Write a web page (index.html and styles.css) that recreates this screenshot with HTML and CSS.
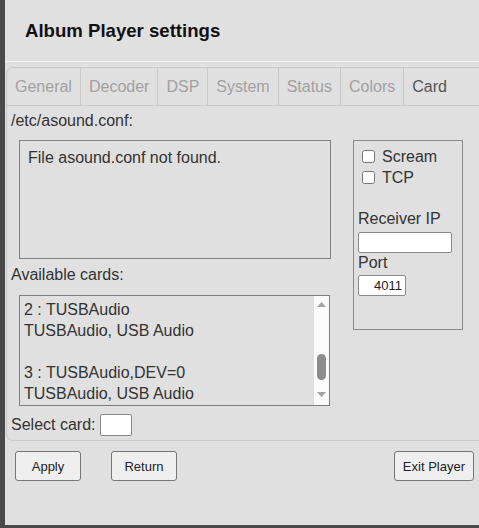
FILE: index.html
```html
<!DOCTYPE html>
<html lang="en">
<head>
  <meta charset="UTF-8" />
  <meta name="viewport" content="width=device-width, initial-scale=1.0"/>
  <title>Album Player settings</title>
  <link rel="stylesheet" href="styles.css">
</head>
<body>
  <div class="app">
    <div class="header">
      <h1>Album Player settings</h1>
    </div>

    <!-- Tabs + panel -->
    <div class="panel">
      <div class="tabs">
        <div class="tab">General</div>
        <div class="tab">Decoder</div>
        <div class="tab">DSP</div>
        <div class="tab">System</div>
        <div class="tab">Status</div>
        <div class="tab">Colors</div>
        <div class="tab active">Card</div>
      </div>

      <div class="content">
        <div class="label">/etc/asound.conf:</div>
        <div class="row">
          <div class="left">
            <textarea class="conf" readonly>File asound.conf not found.</textarea>
            <div class="label cards-label">Available cards:</div>

            <div class="list">
              <div class="list-items">
                <div>2 : TUSBAudio</div>
                <div>TUSBAudio, USB Audio</div>
                <div>&nbsp;</div>
                <div>3 : TUSBAudio,DEV=0</div>
                <div>TUSBAudio, USB Audio</div>
              </div>
              <div class="scrollbar">
                <svg class="arrow up" width="9" height="5" viewBox="0 0 9 5"><polygon points="0,5 4.5,0 9,5" fill="#a3a3a3"/></svg>
                <div class="thumb"></div>
                <svg class="arrow down" width="9" height="5" viewBox="0 0 9 5"><polygon points="0,0 9,0 4.5,5" fill="#a3a3a3"/></svg>
              </div>
            </div>

            <div class="select-row">
              <span>Select card:</span>
              <input type="text" class="card-input" />
            </div>
          </div>

          <!-- Scream -->
          <div class="rbox">
            <label class="check"><input type="checkbox" /> Scream</label>
            <label class="check"><input type="checkbox" /> TCP</label>
            <div class="rlabel first">Receiver IP</div>
            <input type="text" class="ip-input" />
            <div class="rlabel">Port</div>
            <input type="text" class="port-input" value="4011" />
          </div>
        </div>
      </div>
    </div>

    <div class="buttons">
      <button>Apply</button>
      <button class="return">Return</button>
      <button class="exit">Exit Player</button>
    </div>
  </div>
</body>
</html>
```

FILE: styles.css
```css
body {
  margin: 0;
  background-color: #4a4a4a;
  font-family: "Liberation Sans", Arial, sans-serif;
  color: #333;
}
.app {
  margin-left: 5px;
  height: 525px;
  background-color: #e0e0e0;
  overflow: hidden;
}
.header {
  height: 62px;
  box-sizing: border-box;
  padding: 20px 0 0 20px;
  border-bottom: 1px solid #f2f2f2;
}
h1 {
  margin: 0;
  font-size: 18.6px;
  line-height: 21px;
  color: #111;
}

/* Panel */
.panel {
  margin: 5px -20px 0 1px;
  border: 1px solid #c9c9c9;
  border-radius: 7px;
}
.tabs {
  display: flex;
  height: 37px;
  border-bottom: 1px solid #c9c9c9;
}
.tab {
  padding: 0 8px;
  line-height: 37px;
  font-size: 16px;
  color: #a0a0a0;
  border-right: 1px solid #c9c9c9;
}
.tab.active {
  color: #555;
  border-right: none;
}
.content {
  padding: 6px 0 4px 4px;
}
.label {
  font-size: 16px;
  line-height: 18px;
}
.row {
  display: flex;
  align-items: flex-start;
  margin-top: 10px;
}
.left {
  width: 320px;
}
.conf {
  display: block;
  margin: 0 0 0 8px;
  width: 312px;
  height: 119px;
  box-sizing: border-box;
  padding: 8px;
  border: 1px solid #808080;
  background-color: transparent;
  font-family: "Liberation Sans", Arial, sans-serif;
  font-size: 16px;
  color: #333;
  resize: none;
  outline: none;
}
.cards-label {
  margin-top: 7px;
}

/* Cards list */
.list {
  display: flex;
  margin: 11px 0 0 8px;
  width: 311px;
  height: 111px;
  box-sizing: border-box;
  border: 1px solid #7d7d7d;
  overflow: hidden;
}
.list-items {
  flex: 1;
  padding: 3px 0 0 4px;
  font-size: 16px;
  line-height: 21px;
}
.scrollbar {
  width: 15px;
  background-color: #fbfbfb;
  display: flex;
  flex-direction: column;
  align-items: center;
}
.arrow {
  display: block;
}
.arrow.up {
  margin-top: 6px;
}
.thumb {
  margin-top: 47px;
  width: 9px;
  height: 26px;
  border-radius: 5px;
  background-color: #8c8c8c;
}
.arrow.down {
  margin-top: 12px;
}
.select-row {
  display: flex;
  align-items: center;
  height: 22px;
  margin-top: 8px;
  font-size: 16px;
}
.card-input {
  margin-left: 5px;
  width: 32px;
  height: 22px;
}

/* Right box */
.rbox {
  margin-left: 22px;
  width: 110px;
  height: 190px;
  box-sizing: border-box;
  padding: 5px 4px 0 4px;
  border: 1px solid #8a8a8a;
  font-size: 16px;
}
.check {
  display: flex;
  align-items: center;
  height: 21px;
}
.check input {
  margin: 0 7px 0 4px;
  width: 13px;
  height: 13px;
}
.rlabel {
  line-height: 18px;
  margin-top: 1px;
}
.rlabel.first {
  margin-top: 22px;
}
input[type="text"] {
  display: block;
  box-sizing: border-box;
  border: 1px solid #8a8a8a;
  border-radius: 2px;
  background-color: #fff;
  font-family: "Liberation Sans", Arial, sans-serif;
  padding: 0 3px;
}
.ip-input {
  margin-top: 4px;
  width: 94px;
  height: 21px;
}
.port-input {
  margin-top: 3px;
  width: 48px;
  height: 21px;
  font-size: 13px;
  text-align: right;
  color: #222;
}

/* Buttons */
.buttons {
  display: flex;
  margin-top: 10px;
  padding: 0 5px 0 10px;
}
.buttons button {
  min-width: 66px;
  height: 30px;
  padding: 0 8px;
  background-color: #efefef;
  border: 1px solid #767676;
  border-radius: 3px;
  font-family: "Liberation Sans", Arial, sans-serif;
  font-size: 13px;
  color: #222;
}
.buttons .return {
  margin-left: 30px;
}
.buttons .exit {
  margin-left: auto;
}
```
